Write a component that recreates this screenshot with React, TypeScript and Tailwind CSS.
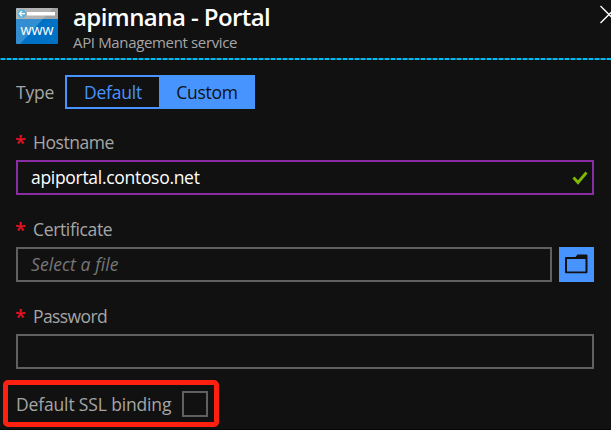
import type { ReactNode } from "react";

function WebsiteIcon() {
  return (
    <svg className="mt-2 h-9 w-[42px] shrink-0" viewBox="0 0 42 36" aria-hidden="true">
      <rect width="42" height="36" rx="1" fill="#0072c6" />
      <path d="M1 0h40a1 1 0 0 1 1 1v10H0V1a1 1 0 0 1 1-1z" fill="#a0a1a2" />
      <path d="M1 0h36L4 36H1a1 1 0 0 1-1-1V1a1 1 0 0 1 1-1z" fill="#fff" opacity=".2" />
      <rect x="11" y="4" width="28" height="3.5" fill="#fff" />
      <circle cx="5.8" cy="5.6" r="4.4" fill="#59b4d9" />
      <path d="M9 5.6H3.5M6 3L3.4 5.6L6 8.2" fill="none" stroke="#fff" strokeWidth="1.3" />
      <text x="21" y="26.6" textAnchor="middle" fill="#fff" fontSize="14" textLength="33" lengthAdjust="spacingAndGlyphs" fontWeight="500">
        www
      </text>
    </svg>
  );
}

function FieldLabel({ children }: { children: ReactNode }) {
  return (
    <div className="flex h-[30px] items-center leading-[28px] tracking-[-0.45px]">
      <span className="w-[17px] -translate-x-px text-[20px] font-semibold text-[#e81123]">*</span>
      <span className="mb-[2px]">{children}</span>
    </div>
  );
}

export default function App() {
  return (
    <main className="flex h-[430px] w-[611px] flex-col overflow-hidden border-b border-[#050505] bg-[#111111] font-['Open_Sans','Noto_Sans',sans-serif] text-[17.5px] text-[#a6a6a6]">
      <header className="flex h-[58px] shrink-0 pl-4">
        <WebsiteIcon />
        <div className="ml-[15px] flex-1">
          <h1 className="mt-[2px] h-[29px] text-[24px] leading-[30px] font-semibold tracking-[-0.57px] text-white">apimnana - Portal</h1>
          <p className="h-6 text-[15px] leading-[23px] tracking-[-0.35px]">API Management service</p>
        </div>
        <svg className="mt-[5px] h-5 w-[11px] shrink-0" viewBox="0 0 11 20" aria-label="Close">
          <path d="M0.5 1L17.5 18M0.5 18L17.5 1" fill="none" stroke="#fff" strokeWidth="1.3" />
        </svg>
      </header>
      <div className="h-[2px] shrink-0 bg-[repeating-linear-gradient(90deg,#0e5870_0_1px,#00bcf2_1px_5px,#0e5870_5px_6px)]" />

      <div className="mt-[15px] flex h-[34px] shrink-0 items-center pl-4">
        <span className="w-[49px] tracking-[-0.2px]">Type</span>
        <div className="flex h-[34px] w-[190px] border-2 border-[#4894fe]">
          <button className="w-[92px] tracking-[-0.2px] text-[#4894fe]">Default</button>
          <button className="flex-1 bg-[#4894fe] pl-[2px] tracking-[-0.3px] text-[#111111]">Custom</button>
        </div>
      </div>

      <section className="mt-[19px] px-4 pr-[17px]">
        <FieldLabel>Hostname</FieldLabel>
        <div className="mt-[2px] flex h-[35px] items-center justify-between border-2 border-[#8a2da5] pr-[4px] pl-[13px] text-white">
          <span className="tracking-[-0.3px]">apiportal.contoso.net</span>
          <svg className="h-[14px] w-4" viewBox="0 0 16 14" aria-label="Valid">
            <path d="M1.5 6.5L6 11.5L14.5 1.5" fill="none" stroke="#7fba00" strokeWidth="2.8" />
          </svg>
        </div>
      </section>

      <section className="mt-[20px] px-4 pr-[17px]">
        <FieldLabel><span className="tracking-[-0.35px]">Certificate</span></FieldLabel>
        <div className="mt-[2px] flex h-[35px] gap-[7px]">
          <div className="flex flex-1 items-center border-2 border-[#606060] pl-[13px] text-[#777777] italic">
            <span className="mb-px tracking-[0.1px]">Select a file</span>
          </div>
          <button className="flex w-[35px] items-center justify-center bg-[#4894fe]" aria-label="Browse">
            <svg className="mb-px h-5 w-[23px]" viewBox="0 0 23 20">
              <path d="M10.5 3L12.5 0.5H21.5Q22.5 0.5 22.5 1.5V18Q22.5 19.3 21.5 19.3H1Q0 19.3 0 18V4Q0 3 1 3z" fill="#111" />
              <rect x="2" y="5" width="18.5" height="12.5" fill="#4894fe" />
            </svg>
          </button>
        </div>
      </section>

      <section className="mt-[20px] px-4 pr-[17px]">
        <FieldLabel><span className="tracking-[-0.6px]">Password</span></FieldLabel>
        <div className="mt-[2px] h-[35px] border-2 border-[#606060]" />
      </section>

      <div className="mt-[11px] ml-[3px] flex h-[47px] w-[216px] shrink-0 items-center justify-between rounded-[5px] border-5 border-[#ff2010] pr-[6px] pl-2">
        <span className="mt-px tracking-[-0.15px] whitespace-nowrap">Default SSL binding</span>
        <span className="h-[26px] w-[26px] border-2 border-[#606060]" />
      </div>
    </main>
  );
}
